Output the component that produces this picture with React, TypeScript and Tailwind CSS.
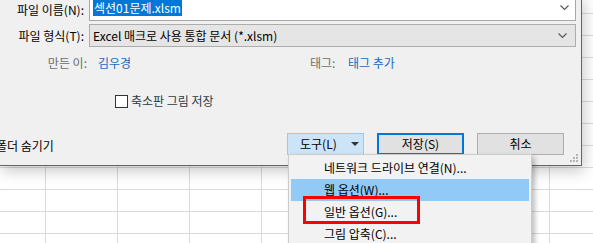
import React from "react";

const font = "font-['Noto_Sans_CJK_KR','Noto_Sans',sans-serif] text-[12px]";

function Chevron() {
  return (
    <svg width="9" height="6" viewBox="0 0 9 6" className="shrink-0">
      <polyline points="0.5,0.5 4.5,4.5 8.5,0.5" fill="none" stroke="#555" strokeWidth="1.1" />
    </svg>
  );
}

function Grip() {
  const dots = [
    [6, 0],
    [3, 3],
    [6, 3],
    [0, 6],
    [3, 6],
    [6, 6],
  ];
  return (
    <svg width="8" height="8" viewBox="0 0 8 8">
      {dots.map(([x, y], i) => (
        <rect key={i} x={x} y={y} width="2" height="2" fill="#b4b4b4" />
      ))}
    </svg>
  );
}

const menuItems = [
  { label: "네트워크 드라이브 연결(N)...", active: false },
  { label: "웹 옵션(W)...", active: true },
  { label: "일반 옵션(G)...", active: false },
  { label: "그림 압축(C)...", active: false },
];

export default function App() {
  return (
    <div
      className={`relative w-[593px] h-[243px] overflow-hidden bg-white ${font} leading-[16px] text-black [background-image:linear-gradient(to_bottom,#dadada_1px,transparent_1px),linear-gradient(to_right,#dadada_1px,transparent_1px)] [background-size:72px_22px] [background-position:45px_13px]`}
    >
      {/* save dialog */}
      <div className="absolute left-0 top-[-5px] w-[582px] h-[171px] bg-[#f0f0f0] border-r border-b border-[#646464] shadow-[2px_5px_14px_rgba(0,0,0,0.22)] flex flex-col">
        <div className="flex h-[26px]">
          <div className="w-[89px] pr-[5px] text-right self-end mb-[3px] whitespace-nowrap">파일 이름(N):</div>
          <div className="w-[487px] h-full bg-white border border-[#a8a8a8] flex items-end justify-between pl-[3px] pr-[6px] pb-[4px]">
            <span className="bg-[#0078d7] text-white px-[1px] leading-[16px]">섹션01문제.xlsm</span>
            <span className="mb-[5px]">
              <Chevron />
            </span>
          </div>
        </div>

        <div className="flex h-[23px] mt-[3px] items-center">
          <div className="w-[89px] pr-[5px] text-right whitespace-nowrap">파일 형식(T):</div>
          <div className="w-[487px] h-full bg-[#e5e5e5] border border-[#adadad] flex items-center justify-between pl-[3px] pr-[8px]">
            <span className="whitespace-nowrap">Excel 매크로 사용 통합 문서 (*.xlsm)</span>
            <Chevron />
          </div>
        </div>

        <div className="flex h-[16px] mt-[8px] items-center whitespace-nowrap">
          <div className="w-[89px] pr-[2px] text-right text-[#6d6d6d]">만든 이:</div>
          <div className="w-[221px] pl-[9px] text-[#1b68c0]">김우경</div>
          <div className="w-[38px] text-[#6d6d6d]">태그:</div>
          <div className="text-[#1b68c0]">태그 추가</div>
        </div>

        <div className="flex h-[16px] mt-[22px] items-center">
          <div className="ml-[115px] w-[13px] h-[13px] bg-white border border-[#333]" />
          <div className="ml-[3px] text-[#2b3a4a] whitespace-nowrap">축소판 그림 저장</div>
        </div>

        <div className="flex h-[22px] mt-[24px] items-center">
          <div className="w-[291px] ml-[-4px] pt-[3px] whitespace-nowrap">폴더 숨기기</div>
          <div className="w-[77px] h-full bg-[#cce4f7] border border-[#99c9ef] flex items-center pl-[12px] pr-[4px]">
            <span className="flex-1">도구(L)</span>
            <svg width="8" height="4" viewBox="0 0 8 4">
              <polygon points="0,0 8,0 4,4" fill="#333" />
            </svg>
          </div>
          <div className="ml-[13px] w-[87px] h-full bg-[#e1e1e1] border-2 border-[#0078d7] flex items-center justify-center">
            저장(S)
          </div>
          <div className="ml-[13px] w-[87px] h-full bg-[#e1e1e1] border border-[#adadad] flex items-center justify-center">
            취소
          </div>
        </div>

        <div className="absolute right-[3px] bottom-[3px]">
          <Grip />
        </div>
      </div>

      {/* tools dropdown menu */}
      <div className="absolute left-[288px] top-[154px] w-[244px] h-[100px] bg-[#f2f2f2] border border-[#cccccc] shadow-[3px_3px_5px_rgba(0,0,0,0.25)] pt-[2px] px-[2px]">
        {menuItems.map((item) => (
          <div
            key={item.label}
            className={`h-[22px] flex items-center pl-[33px] whitespace-nowrap ${item.active ? "bg-[#91c9f7]" : ""}`}
          >
            {item.label}
          </div>
        ))}
      </div>

      {/* annotation box */}
      <div className="absolute left-[303px] top-[196px] w-[117px] h-[28px] border-[3px] border-[#ff0000]" />
    </div>
  );
}
